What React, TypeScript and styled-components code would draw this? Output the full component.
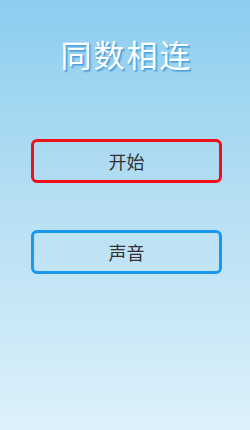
import { createGlobalStyle } from 'styled-components';
import styled from 'styled-components';

const GlobalStyle = createGlobalStyle`
    html, body {
        margin: 0;
        padding: 0;
    }
    body {
        font-family: "Noto Sans CJK SC", "Liberation Sans", sans-serif;
    }
`;

const Screen = styled.div`
    width: 250px;
    height: 430px;
    display: flex;
    flex-direction: column;
    align-items: center;
    background: linear-gradient(to bottom, #8dcdef 0%, #b8e0f4 50%, #ddf1fa 100%);
    overflow: hidden;
`;

const Title = styled.h1`
    margin: 33px 0 0 3px;
    font-size: 31px;
    font-weight: 400;
    line-height: 42px;
    letter-spacing: 2px;
    color: #ffffff;
    text-shadow: 1px 1px 0 #4aa3e0, 2px 2px 1px rgba(60, 140, 210, 0.5);
`;

const Menu = styled.div`
    display: flex;
    flex-direction: column;
    gap: 47px;
    margin: 64px 0 0 3px;
`;

const MenuButton = styled.button<{ $accent: string }>`
    width: 191px;
    height: 44px;
    box-sizing: border-box;
    border: 3px solid ${({ $accent }) => $accent};
    border-radius: 6px;
    background: transparent;
    font-family: "Noto Sans CJK SC", "Liberation Sans", sans-serif;
    font-size: 18px;
    color: #333333;
    padding: 0;
    cursor: pointer;
`;

export default function App() {
    return (
        <>
            <GlobalStyle />
            <Screen>
                <Title>同数相连</Title>
                <Menu>
                    <MenuButton $accent="#f0101a">开始</MenuButton>
                    <MenuButton $accent="#1a98ee">声音</MenuButton>
                </Menu>
            </Screen>
        </>
    );
}
